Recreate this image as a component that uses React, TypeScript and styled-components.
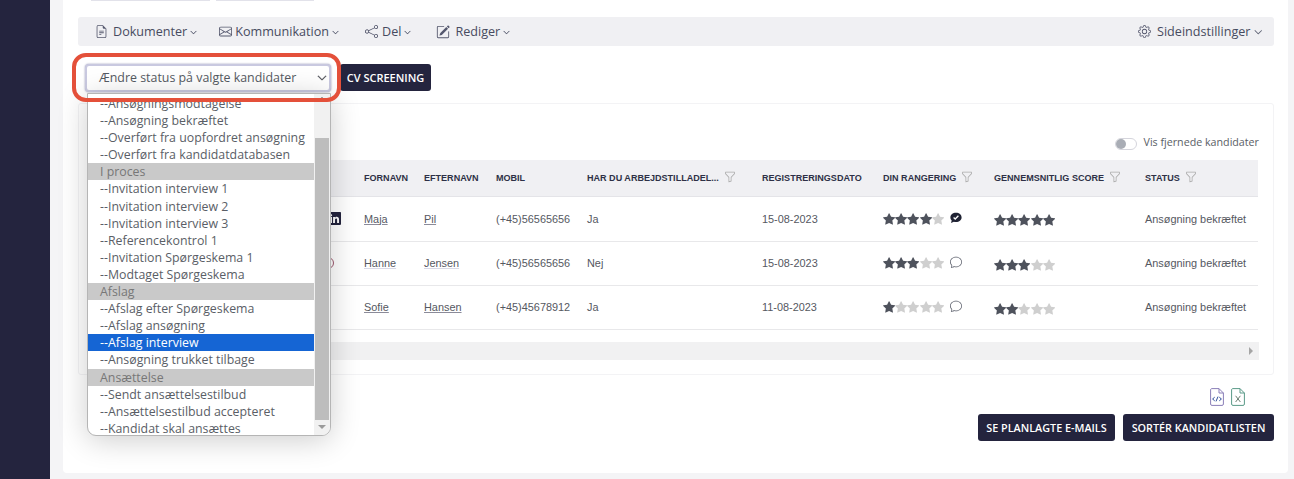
import React from "react";
import styled, { createGlobalStyle } from "styled-components";
import {
  BsFileEarmarkText, BsEnvelope, BsShare, BsPencilSquare, BsGear, BsChevronDown,
  BsFunnel, BsChat, BsStarFill, BsLinkedin,
} from "react-icons/bs";

const Global = createGlobalStyle`
  html, body { margin: 0; padding: 0; height: 479px; overflow: hidden; background: #f4f4f6; }
  body { font-family: "Open Sans", "Liberation Sans", sans-serif; color: #50545c; }
  * { box-sizing: border-box; }
`;

const Page = styled.div`display: flex; height: 479px; overflow: hidden;`;
const Sidebar = styled.aside`width: 50px; flex: none; background: #24243e;`;
const Card = styled.main`
  margin: 0 6px 6px 13px; flex: 1; height: 473px; background: #fff; border-radius: 0 0 4px 4px;
  padding: 0 14px 0 15px; display: flex; flex-direction: column; min-width: 0;
`;
const Stubs = styled.div`display: flex; gap: 6px; padding-left: 13px; height: 1px; margin-bottom: 16px;`;
const Stub = styled.div<{ $w: number }>`width: ${p => p.$w}px; background: #e2e2ea;`;

const Toolbar = styled.nav`
  height: 29px; background: #f0f0f3; border-radius: 3px; display: flex; align-items: center;
  padding: 0 12px 0 17px; font-size: 12.6px; color: #474b60;
`;
const ToolItem = styled.span<{ $gap: number; $iconGap: number }>`
  display: inline-flex; align-items: center; margin-right: ${p => p.$gap}px;
  svg.main { font-size: 13px; color: #55586e; margin-right: ${p => p.$iconGap}px; }
  svg.wide { font-size: 14px; }
  svg.chev { font-size: 7px; margin-left: 3px; margin-top: 2px; stroke: currentColor; stroke-width: 0.6; }
  svg.chevBig { font-size: 8.5px; margin-left: 3px; margin-top: 2px; stroke: currentColor; stroke-width: 0.6; }
`;
const Spacer = styled.div`flex: 1;`;

const ActionRow = styled.div`
  position: relative; height: 29px; margin-top: 17px; display: flex; align-items: center;
  padding-left: 7px;
`;
const SelectBox = styled.div`
  width: 246px; height: 28px; border: 2px solid #c9c9e0; border-radius: 4px; background: #fff;
  display: flex; align-items: center; justify-content: space-between; padding: 0 2px 0 12px;
  font-size: 12.4px; color: #555a62; box-shadow: 0 0 2px #8f8fb0;
  svg { font-size: 10px; color: #3a3d44; stroke: currentColor; stroke-width: 0.8; }
`;
const DarkButton = styled.button`
  background: #24243e; color: #fff; border: 0; border-radius: 3px; height: 27px; padding: 0;
  font-family: "Open Sans", sans-serif; font-weight: 600; font-size: 11px; white-space: nowrap;
`;
const CvButton = styled(DarkButton)`margin-left: 9px; width: 91px;`;
const Highlight = styled.div`
  position: absolute; left: -6px; top: -10px; width: 269px; height: 49px;
  border: 4px solid #e4503a; border-radius: 14px; z-index: 3; pointer-events: none;
`;

const Dropdown = styled.div`
  position: absolute; left: 9px; top: 30px; width: 244px; height: 343px; background: #fff;
  border: 1px solid #b5b5b5; border-radius: 0 0 9px 9px; overflow: hidden; display: flex; z-index: 2;
  box-shadow: 0 4px 30px rgba(0, 0, 0, 0.2);
`;
const OptionList = styled.div`flex: 1; padding-top: 1px; font-size: 12.35px; min-width: 0;`;
const Option = styled.div<{ $kind?: string }>`
  height: 17.1px; line-height: 17px; padding-left: 12px; white-space: nowrap;
  color: ${p => (p.$kind === "group" ? "#777" : p.$kind === "selected" ? "#fff" : "#5a5e66")};
  background: ${p => (p.$kind === "group" ? "#c9c9c9" : p.$kind === "selected" ? "#1565d4" : "transparent")};
`;
const ScrollTrack = styled.div`
  width: 16px; flex: none; background: #f1f1f1; display: flex; flex-direction: column; align-items: center;
`;
const ScrollThumb = styled.div`width: 14px; height: 282px; background: #bdbdbd; margin-bottom: 5px;`;
const ArrowUp = styled.div`
  width: 0; height: 0; border: 4px solid transparent; border-top: 0; border-bottom: 4px solid #555;
  margin: 3px 0 37px;
`;
const ArrowDown = styled.div`
  width: 0; height: 0; border: 4px solid transparent; border-bottom: 0; border-top: 4px solid #9a9a9a;
`;

const Panel = styled.section`
  margin-top: 11px; height: 272px; border: 1px solid #f3f3f5; border-radius: 3px; padding: 0 14px 0 9px;
  display: flex; flex-direction: column;
`;
const ToggleRow = styled.div`
  height: 56px; padding-top: 28px; display: flex; justify-content: flex-end; align-items: flex-start;
  gap: 7px; font-size: 10.7px; line-height: 20px; color: #5a5e66;
`;
const Toggle = styled.span`
  width: 22px; height: 12px; border: 1px solid #d5d5dc; border-radius: 6px; margin-top: 6px; position: relative;
  &::before { content: ""; position: absolute; left: 0; top: 0; width: 10px; height: 10px; border-radius: 50%; background: #a9adb5; }
`;
const TableGrid = styled.div`
  display: grid; grid-template-columns: 276px 60px 72px 91px 175px 121px 111px 151px 113px;
  font-family: "Liberation Sans", Arial, sans-serif; font-size: 10.9px; color: #55585f;
`;
const HeadCell = styled.div`
  height: 37px; background: #f0f0f3; border-bottom: 1px solid #e4e4e8; display: flex; align-items: center; gap: 5px;
  font-weight: 700; font-size: 9.05px; color: #2e3046; white-space: nowrap;
  svg { font-size: 12px; color: #a9a9a9; margin-top: -2px; }
`;
const BodyCell = styled.div<{ $h: number }>`
  height: ${p => p.$h}px; border-bottom: 1px solid #e8e8ea; display: flex; align-items: center; white-space: nowrap;
  padding-bottom: 1px;
`;
const NameLink = styled.a<{ $soft: boolean }>`
  color: #55585f; text-decoration: underline; text-underline-offset: 1px;
  text-decoration-color: ${p => (p.$soft ? "#d8d8e6" : "#8b8b99")};
`;
const IconCell = styled(BodyCell)`justify-content: flex-end; padding-right: 24px;`;
const LinkedIn = styled(BsLinkedin)`font-size: 13px; color: #24243e; margin-right: -1px;`;
const Ring = styled.span`
  width: 12px; height: 12px; border-radius: 50%; border: 1px solid #a05a70; margin-right: 6px;
`;
const Stars = styled.span<{ $shift?: number }>`
  display: inline-flex; margin-top: ${p => p.$shift ?? 0}px;
`;
const Star = styled(BsStarFill)<{ $on: boolean }>`
  font-size: 12px; width: 12.2px; color: ${p => (p.$on ? "#4e525c" : "#cfcfcf")};
`;
const Comment = styled.span`
  margin-left: 6px; display: inline-flex; font-size: 12px; color: #5a5e6a; margin-top: -2px;
`;
const HScroll = styled.div`
  margin-top: 12px; height: 18px; background: #f1f1f2; display: flex; align-items: center; justify-content: flex-end;
  padding-right: 6px;
`;
const ArrowRight = styled.span`
  width: 0; height: 0; border: 4px solid transparent; border-right: 0; border-left: 4px solid #a5a5a5;
`;
const FileIcons = styled.div`
  margin-top: 13px; height: 20px; display: flex; justify-content: flex-end; gap: 7px; padding-right: 29px;
`;
const Footer = styled.div`margin-top: 6px; display: flex; justify-content: flex-end; gap: 8px;`;
const FootButton = styled(DarkButton)<{ $w: number }>`width: ${p => p.$w}px; font-size: 10.8px;`;

const FileCodeIcon = () => (
  <svg width="14" height="18" viewBox="0 0 14 18" fill="none">
    <path d="M1.5 .6H9L13.4 5V16a1.4 1.4 0 0 1-1.4 1.4H2A1.4 1.4 0 0 1 .6 16V2A1.4 1.4 0 0 1 1.5 .6ZM9 .6V5h4.4" stroke="#8a7fb8" strokeWidth="1" />
    <path d="M4.7 9.2 2.6 11l2.1 1.8M9.3 9.2 11.4 11l-2.1 1.8M8 8.6 6 13.4" stroke="#2f4f9a" strokeWidth="1" />
  </svg>
);
const FileXIcon = () => (
  <svg width="14" height="18" viewBox="0 0 14 18" fill="none">
    <path d="M1.5 .6H9L13.4 5V16a1.4 1.4 0 0 1-1.4 1.4H2A1.4 1.4 0 0 1 .6 16V2A1.4 1.4 0 0 1 1.5 .6ZM9 .6V5h4.4" stroke="#5a9a88" strokeWidth="1" />
    <path d="M4.6 7.8 9.4 14M9.4 7.8 4.6 14" stroke="#6b7f72" strokeWidth="1" />
  </svg>
);
const ChatCheck = () => (
  <svg width="12" height="12" viewBox="0 0 12 12">
    <path d="M6 .8C2.8.8.4 2.8.4 5.4c0 1.2.5 2.2 1.3 3L1 11l2.9-1.3c.6.2 1.3.3 2.1.3 3.2 0 5.6-2 5.6-4.6S9.2.8 6 .8Z" fill="#1f2233" />
    <path d="M3.6 5.6 5.2 7 8.4 3.8" stroke="#fff" strokeWidth="1.3" fill="none" />
  </svg>
);

const options: [string, string?][] = [
  ["--Ansøgningsmodtagelse"], ["--Ansøgning bekræftet"], ["--Overført fra uopfordret ansøgning"],
  ["--Overført fra kandidatdatabasen"], ["I proces", "group"], ["--Invitation interview 1"],
  ["--Invitation interview 2"], ["--Invitation interview 3"], ["--Referencekontrol 1"],
  ["--Invitation Spørgeskema 1"], ["--Modtaget Spørgeskema"], ["Afslag", "group"],
  ["--Afslag efter Spørgeskema"], ["--Afslag ansøgning"], ["--Afslag interview", "selected"],
  ["--Ansøgning trukket tilbage"], ["Ansættelse", "group"], ["--Sendt ansættelsestilbud"],
  ["--Ansættelsestilbud accepteret"], ["--Kandidat skal ansættes"],
];

const heads: [string, boolean][] = [
  ["", false], ["FORNAVN", false], ["EFTERNAVN", false], ["MOBIL", false],
  ["HAR DU ARBEJDSTILLADEL...", true], ["REGISTRERINGSDATO", false], ["DIN RANGERING", true],
  ["GENNEMSNITLIG SCORE", true], ["STATUS", true],
];

const rows = [
  { h: 45, icon: "in", first: "Maja", last: "Pil", soft: false, mobile: "(+45)56565656", permit: "Ja", date: "15-08-2023", mine: 4, dark: true, avg: 5 },
  { h: 44, icon: "ring", first: "Hanne", last: "Jensen", soft: true, mobile: "(+45)56565656", permit: "Nej", date: "15-08-2023", mine: 3, dark: false, avg: 3 },
  { h: 44, icon: "", first: "Sofie", last: "Hansen", soft: false, mobile: "(+45)45678912", permit: "Ja", date: "11-08-2023", mine: 1, dark: false, avg: 2 },
];

const StarRow = ({ n, shift }: { n: number; shift?: number }) => (
  <Stars $shift={shift}>
    {[0, 1, 2, 3, 4].map(i => <Star key={i} $on={i < n} />)}
  </Stars>
);

export default function App() {
  return (
    <Page>
      <Global />
      <Sidebar />
      <Card>
        <Stubs><Stub $w={119} /><Stub $w={98} /></Stubs>
        <Toolbar>
          <ToolItem $gap={22} $iconGap={5}><BsFileEarmarkText className="main" />Dokumenter<BsChevronDown className="chev" /></ToolItem>
          <ToolItem $gap={26} $iconGap={3}><BsEnvelope className="main" />Kommunikation<BsChevronDown className="chev" /></ToolItem>
          <ToolItem $gap={25} $iconGap={4}><BsShare className="main" />Del<BsChevronDown className="chev" /></ToolItem>
          <ToolItem $gap={0} $iconGap={5}><BsPencilSquare className="main wide" />Rediger<BsChevronDown className="chev" /></ToolItem>
          <Spacer />
          <ToolItem $gap={0} $iconGap={6}><BsGear className="main" />Sideindstillinger<BsChevronDown className="chevBig" /></ToolItem>
        </Toolbar>
        <ActionRow>
          <SelectBox>Ændre status på valgte kandidater<BsChevronDown /></SelectBox>
          <CvButton>CV SCREENING</CvButton>
          <Highlight />
          <Dropdown>
            <OptionList>
              {options.map(([t, k]) => <Option key={t} $kind={k}>{t}</Option>)}
            </OptionList>
            <ScrollTrack>
              <ArrowUp />
              <ScrollThumb />
              <ArrowDown />
            </ScrollTrack>
          </Dropdown>
        </ActionRow>
        <Panel>
          <ToggleRow><Toggle />Vis fjernede kandidater</ToggleRow>
          <TableGrid>
            {heads.map(([t, f], i) => (
              <HeadCell key={i}>{t}{f && <BsFunnel />}</HeadCell>
            ))}
            {rows.map(r => (
              <React.Fragment key={r.first}>
                <IconCell $h={r.h}>
                  {r.icon === "in" && <LinkedIn />}
                  {r.icon === "ring" && <Ring />}
                </IconCell>
                <BodyCell $h={r.h}><NameLink $soft={r.soft}>{r.first}</NameLink></BodyCell>
                <BodyCell $h={r.h}><NameLink $soft={r.soft}>{r.last}</NameLink></BodyCell>
                <BodyCell $h={r.h}>{r.mobile}</BodyCell>
                <BodyCell $h={r.h}>{r.permit}</BodyCell>
                <BodyCell $h={r.h}>{r.date}</BodyCell>
                <BodyCell $h={r.h}>
                  <StarRow n={r.mine} />
                  <Comment>{r.dark ? <ChatCheck /> : <BsChat />}</Comment>
                </BodyCell>
                <BodyCell $h={r.h}><StarRow n={r.avg} shift={3} /></BodyCell>
                <BodyCell $h={r.h}>Ansøgning bekræftet</BodyCell>
              </React.Fragment>
            ))}
          </TableGrid>
          <HScroll><ArrowRight /></HScroll>
        </Panel>
        <FileIcons>
          <FileCodeIcon />
          <FileXIcon />
        </FileIcons>
        <Footer>
          <FootButton $w={137}>SE PLANLAGTE E-MAILS</FootButton>
          <FootButton $w={151}>SORTÉR KANDIDATLISTEN</FootButton>
        </Footer>
      </Card>
    </Page>
  );
}
